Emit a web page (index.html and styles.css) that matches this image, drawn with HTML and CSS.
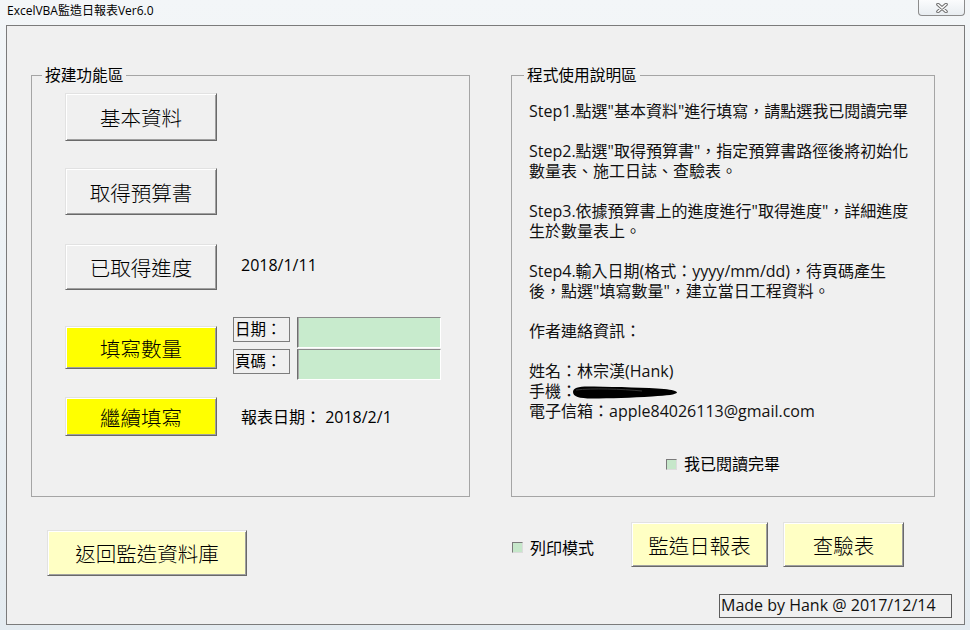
FILE: index.html
```html
<!DOCTYPE html>
<html lang="zh-Hant">
<head>
<meta charset="utf-8">
<title>ExcelVBA監造日報表Ver6.0</title>
<link rel="stylesheet" href="styles.css">
</head>
<body>
<div class="titlebar">
  <span class="title">ExcelVBA監造日報表Ver6.0</span>
  <button class="close" aria-label="關閉">
    <svg width="12" height="10" viewBox="0 0 12 10">
      <path d="M2 1.5 L10 8.5 M10 1.5 L2 8.5" stroke="#6f6f6f" stroke-width="3.6" stroke-linecap="round"/>
      <path d="M2 1.5 L10 8.5 M10 1.5 L2 8.5" stroke="#ffffff" stroke-width="1.6" stroke-linecap="round"/>
    </svg>
  </button>
</div>
<div class="window">
  <div class="frames">
    <fieldset class="frame frame-left">
      <legend>按建功能區</legend>
      <div class="left-body">
        <div class="row r1"><button class="btn">基本資料</button></div>
        <div class="row r2"><button class="btn">取得預算書</button></div>
        <div class="row r3"><button class="btn">已取得進度</button><span class="info">2018/1/11</span></div>
        <div class="row r4">
          <button class="btn yellow">填寫數量</button>
          <div class="fields">
            <span class="flabel">日期：</span><span class="tbox"></span>
            <span class="flabel">頁碼：</span><span class="tbox"></span>
          </div>
        </div>
        <div class="row r5"><button class="btn yellow">繼續填寫</button><span class="info">報表日期： 2018/2/1</span></div>
      </div>
    </fieldset>
    <fieldset class="frame frame-right">
      <legend>程式使用說明區</legend>
      <div class="right-body">
        <div class="help">
          <p>Step1.點選"基本資料"進行填寫，請點選我已閱讀完畢</p>
          <p>Step2.點選"取得預算書"，指定預算書路徑後將初始化<br>數量表、施工日誌、查驗表。</p>
          <p>Step3.依據預算書上的進度進行"取得進度"，詳細進度<br>生於數量表上。</p>
          <p>Step4.輸入日期(格式：yyyy/mm/dd)，待頁碼產生<br>後，點選"填寫數量"，建立當日工程資料。</p>
          <p>作者連絡資訊：</p>
          <p class="last">姓名：林宗漢(Hank)<br>手機：<svg class="redact" width="106" height="16" viewBox="0 0 106 16"><path d="M1 8 C1 3 8 2 22 2.5 C45 3 75 3.5 92 5 C100 5.8 105 7 105 8.5 C104 10.5 96 11.5 80 12.5 C60 13.8 38 14.5 20 14.5 C7 14.5 1 12.5 1 8 Z" fill="#000"/><path d="M4 6 C20 4 50 5 70 7" stroke="#444" stroke-width="0.8" fill="none"/></svg><br>電子信箱：apple84026113@gmail.com</p>
        </div>
        <div class="check read"><span class="box"></span><span>我已閱讀完畢</span></div>
      </div>
    </fieldset>
  </div>
  <div class="bottom">
    <button class="btn pale back">返回監造資料庫</button>
    <div class="cluster">
      <div class="cluster-row">
        <div class="check print"><span class="box"></span><span>列印模式</span></div>
        <button class="btn pale report">監造日報表</button>
        <button class="btn pale inspect">查驗表</button>
      </div>
      <div class="made">Made by Hank @ 2017/12/14</div>
    </div>
  </div>
</div>
</body>
</html>
```
FILE: styles.css
```css
html, body {
  margin: 0;
  padding: 0;
}
body {
  width: 970px;
  height: 630px;
  overflow: hidden;
  background: linear-gradient(180deg, #f3f6f8 0%, #eaf0f4 60%, #e4ebf0 100%);
  font-family: "Open Sans", "Noto Sans CJK TC", sans-serif;
  color: #000;
}

.titlebar {
  height: 25px;
  display: flex;
  justify-content: space-between;
  align-items: flex-start;
  padding-left: 7px;
  box-sizing: border-box;
}
.title {
  font-size: 12px;
  line-height: 21px;
  color: #000;
}
.close {
  width: 47px;
  height: 16px;
  margin-right: 5px;
  padding: 0;
  border: 1px solid #8c8c8c;
  border-top: none;
  border-radius: 0 0 4px 4px;
  background: linear-gradient(180deg, #fbfcfd, #e8edf1);
  display: flex;
  align-items: center;
  justify-content: center;
}

.window {
  margin-left: 6px;
  width: 959px;
  height: 600px;
  box-sizing: border-box;
  border: 1px solid #7b7b7b;
  background: #f0f0f0;
}

.frames {
  display: flex;
  gap: 41px;
  padding-left: 24px;
  padding-top: 39px;
}
.frame {
  margin: 0;
  padding: 0;
  min-width: 0;
  border: 1px solid #a5a5a5;
  height: 432px;
  box-sizing: border-box;
}
.frame legend {
  font-size: 15.7px;
  line-height: 20px;
  padding: 0 3px;
  color: #000;
}
.frame-left {
  width: 439px;
}
.frame-left legend {
  margin-left: 10px;
}
.frame-right {
  width: 424px;
}
.frame-right legend {
  margin-left: 12px;
}

.left-body {
  padding: 8px 0 0 33px;
}
.row {
  display: flex;
  align-items: center;
}
.r1 { margin-top: 0; }
.r1 .btn { height: 48px; }
.r2 { margin-top: 27px; }
.r2 .btn { height: 47px; }
.r3 { margin-top: 29px; }
.r3 .btn { height: 46px; }
.r3 .info { padding-bottom: 5px; }
.r4 { margin-top: 27px; align-items: flex-start; }
.r4 .btn { height: 43px; margin-top: 9px; }
.r5 { margin-top: 17px; }
.r5 .btn { height: 39px; }

.btn {
  box-sizing: border-box;
  width: 152px;
  padding: 0;
  margin: 0;
  font-family: "Noto Sans CJK TC", sans-serif;
  font-size: 20.5px;
  font-weight: 300;
  color: #000;
  background: #f0f0f0;
  border: 1px solid;
  border-color: #e2e2e2 #696969 #696969 #e2e2e2;
  box-shadow: inset 1px 1px 0 #ffffff, inset -1px -1px 0 #a0a0a0;
}
.btn.yellow {
  background: #ffff00;
}
.btn.pale {
  background: #ffffc4;
}

.info {
  margin-left: 24px;
  font-size: 16px;
  line-height: 20px;
  white-space: nowrap;
}

.fields {
  margin-left: 16px;
  display: grid;
  grid-template-columns: 57px 144px;
  grid-template-rows: 31px 31px;
  column-gap: 7px;
  row-gap: 1px;
}
.flabel {
  box-sizing: border-box;
  height: 25px;
  border: 1px solid #7d7d7d;
  font-size: 15.5px;
  line-height: 22px;
  padding-left: 1px;
  white-space: nowrap;
  overflow: hidden;
}
.tbox {
  box-sizing: border-box;
  background: #c8ebcd;
  border: 1px solid;
  border-color: #8a8a8a #ffffff #ffffff #6e6e6e;
  box-shadow: inset 1px 0 0 #a8a8a8;
}

.right-body {
  padding-top: 16px;
}
.help {
  padding-left: 17px;
}
.help p {
  margin: 0 0 20px;
  font-size: 16px;
  line-height: 20px;
  white-space: nowrap;
  color: #111;
}
.help p.last {
  margin-bottom: 0;
}
.redact {
  vertical-align: -3px;
  margin-left: -5px;
}

.check {
  display: flex;
  align-items: center;
  font-size: 16px;
  line-height: 20px;
  white-space: nowrap;
}
.check .box {
  box-sizing: border-box;
  width: 11px;
  height: 11px;
  margin-right: 7px;
  background: #c6e7ca;
  border: 1px solid;
  border-color: #7a7a7a #dcdcdc #dcdcdc #7a7a7a;
}
.read {
  justify-content: center;
  margin-top: 33px;
}

.bottom {
  display: flex;
  padding-left: 40px;
  margin-top: 25px;
}
.back {
  width: 200px;
  height: 46px;
  margin-top: 8px;
}
.cluster {
  margin-left: 265px;
  width: 440px;
  display: flex;
  flex-direction: column;
}
.cluster-row {
  display: flex;
  align-items: center;
}
.print {
  margin-top: 6px;
}
.report {
  width: 137px;
  height: 45px;
  margin-left: 37px;
}
.inspect {
  width: 121px;
  height: 45px;
  margin-left: 15px;
}
.made {
  align-self: flex-end;
  box-sizing: border-box;
  width: 233px;
  height: 24px;
  margin-top: 27px;
  border: 1px solid #5c5c5c;
  font-size: 16px;
  line-height: 21px;
  padding-left: 1px;
  white-space: nowrap;
  color: #111;
}
```
